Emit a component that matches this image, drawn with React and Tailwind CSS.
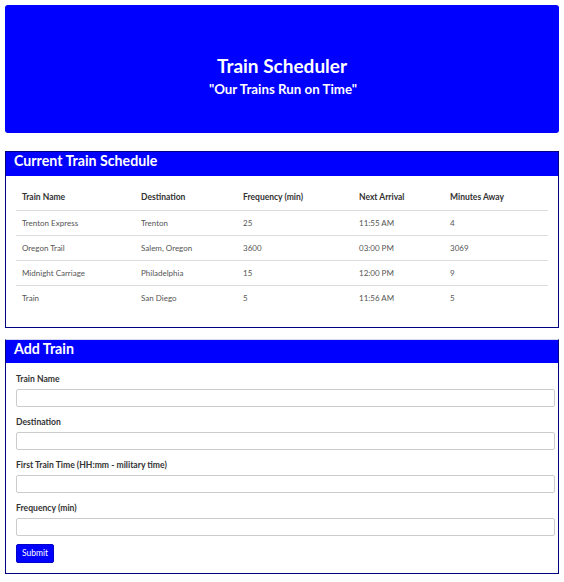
import React from "react";

const rows = [
  ["Trenton Express", "Trenton", "25", "11:55 AM", "4"],
  ["Oregon Trail", "Salem, Oregon", "3600", "03:00 PM", "3069"],
  ["Midnight Carriage", "Philadelphia", "15", "12:00 PM", "9"],
  ["Train", "San Diego", "5", "11:56 AM", "5"],
];

const widths = ["w-[119px]", "w-[102px]", "w-[116px]", "w-[91px]", "w-[104px]"];
const heads = ["Train Name", "Destination", "Frequency (min)", "Next Arrival", "Minutes Away"];

function Field({ label }) {
  return (
    <div className="mb-[8px]">
      <div className="text-[8.6px] font-bold text-[#333] h-[15px] leading-[15px] mb-[2px]">{label}</div>
      <div className="h-[18px] border border-[#ccc] rounded-[2px] bg-white"></div>
    </div>
  );
}

export default function App() {
  return (
    <div
      className="w-[564px] h-[582px] bg-white p-[5px]"
      style={{ fontFamily: "Lato, 'Noto Sans', sans-serif" }}
    >
      <div className="h-[128px] bg-[#0000ff] rounded-[3px] flex flex-col items-center justify-center text-white pt-[14px]">
        <div className="text-[19px] font-bold leading-[26px]">Train Scheduler</div>
        <div className="text-[13.3px] font-bold leading-[20px] pl-[2px]">"Our Trains Run on Time"</div>
      </div>

      <div className="mt-[18px] border border-[#000080]">
        <div className="h-[24px] bg-[#0000ff] text-white text-[14.2px] font-bold leading-[18px] px-[8px]">
          Current Train Schedule
        </div>
        <div className="px-[10px] pt-[10px] pb-[17px]">
          <table className="border-collapse text-[8px]">
            <thead>
              <tr className="h-[24px]">
                {heads.map((h, i) => (
                  <th key={h} className={`${widths[i]} text-left font-bold text-[8.5px] text-[#333] px-[6px] border-b border-[#ddd]`}>
                    {h}
                  </th>
                ))}
              </tr>
            </thead>
            <tbody>
              {rows.map((r, ri) => (
                <tr key={ri} className={`h-[25px] ${ri < rows.length - 1 ? "border-b border-[#ddd]" : ""}`}>
                  {r.map((c, i) => (
                    <td key={i} className="px-[6px] text-[#555]">{c}</td>
                  ))}
                </tr>
              ))}
            </tbody>
          </table>
        </div>
      </div>

      <div className="mt-[11px] border border-[#000080] border-t-[#d8d8f0]">
        <div className="h-[23px] bg-[#0000ff] text-white text-[14.2px] font-bold leading-[18px] px-[8px]">
          Add Train
        </div>
        <div className="pl-[10px] pr-[3px] pt-[9px] pb-[10px]">
          <Field label="Train Name" />
          <Field label="Destination" />
          <Field label="First Train Time (HH:mm - military time)" />
          <Field label="Frequency (min)" />
          <div className="w-[38px] h-[19px] bg-[#0000ff] border border-[#0000cc] rounded-[2px] text-white text-[8.5px] flex items-center justify-center mt-[1px]">
            Submit
          </div>
        </div>
      </div>
    </div>
  );
}
